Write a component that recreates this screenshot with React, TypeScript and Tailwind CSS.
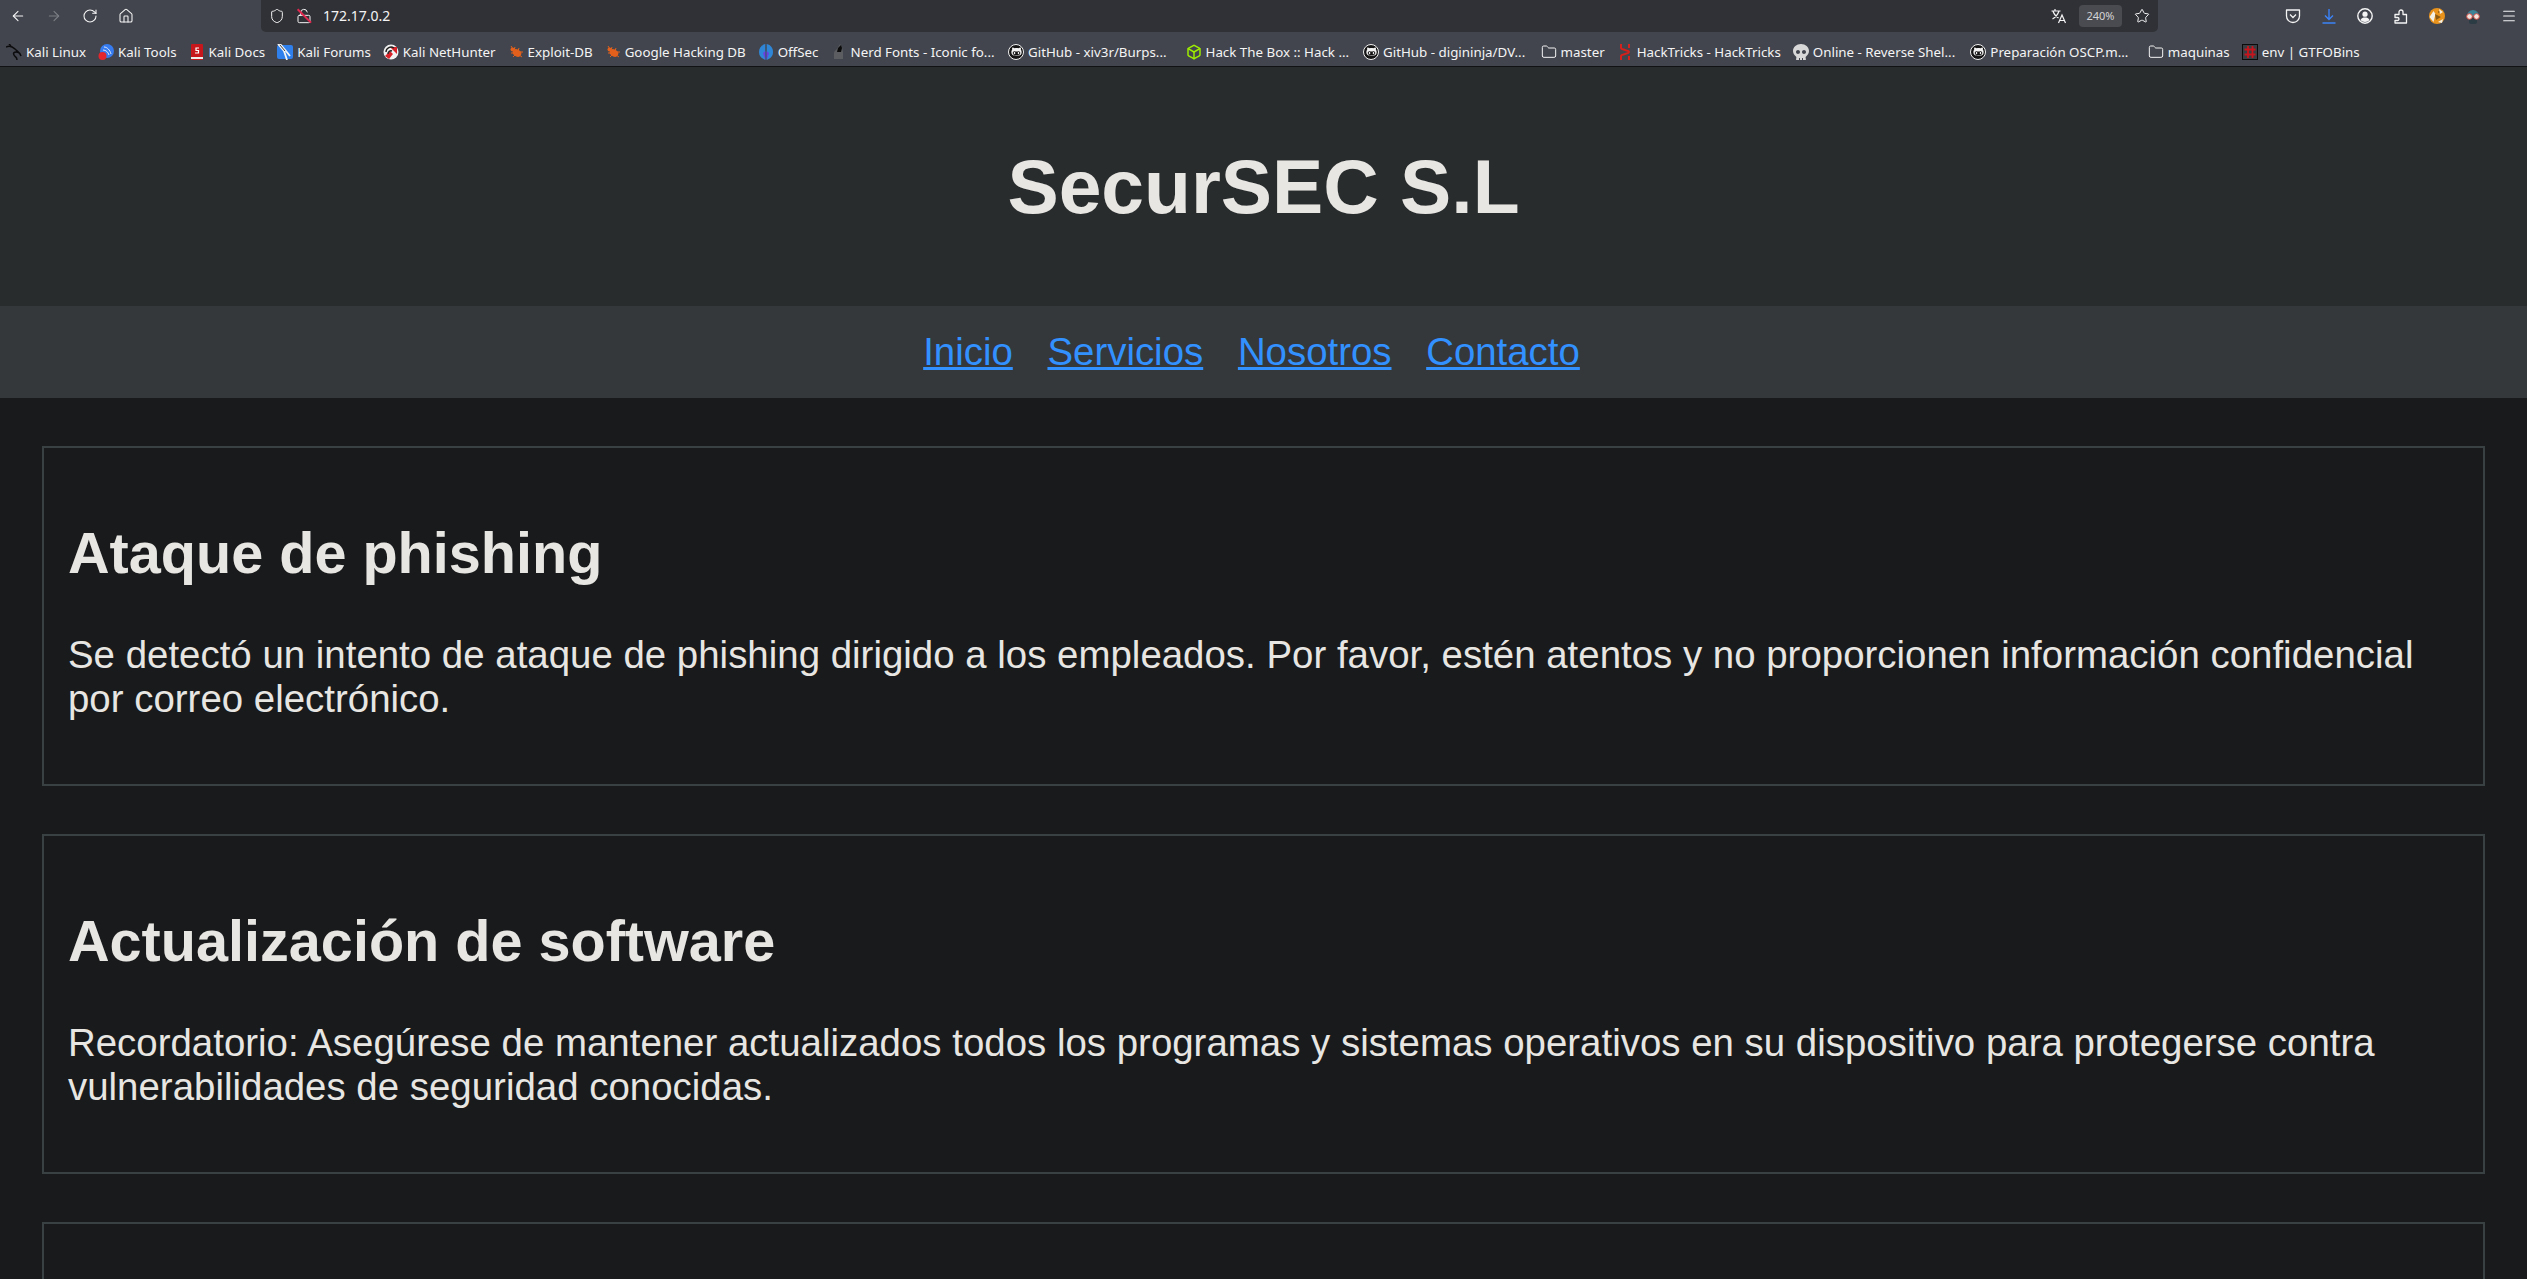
import type { ReactNode } from "react";
import {
  ArrowLeft,
  ArrowRight,
  Box,
  Folder,
  Home,
  LockOpen,
  Menu,
  RotateCw,
  Shield,
  Star,
} from "lucide-react";
import { FaGithubAlt, FaSkull } from "react-icons/fa";

function KaliIcon() {
  return (
    <svg viewBox="0 0 16 16" className="h-4 w-4" fill="none" stroke="#0c0c0e" strokeWidth="1.5">
      <path d="M0 3c4-2 7 0 9 2s5 3 6 7c-1-3-3-4-5-4-2 0-3 1-2 3s3 2 3 5" />
      <path d="M5 2L3 0" />
    </svg>
  );
}

function ToolsIcon() {
  return (
    <svg viewBox="0 0 16 16" className="h-4 w-4">
      <circle cx="9" cy="7" r="7" fill="#367bf0" />
      <path d="M6 3c3 0 6 3 7 7M5 6c3 0 5 2 6 5" stroke="#dfe8f8" fill="none" />
      <circle cx="4.5" cy="12" r="4" fill="#e3262e" />
    </svg>
  );
}

function DocsIcon() {
  return (
    <svg viewBox="0 0 16 16" className="h-4 w-4">
      <rect x="2" y="0" width="12" height="16" rx="1" fill="#c8161d" />
      <rect x="2" y="13" width="12" height="2" fill="#eee" />
      <path d="M10 4H7v2.5h2.5V9H6" stroke="#fff" strokeWidth="1.2" fill="none" />
    </svg>
  );
}

function ForumsIcon() {
  return (
    <svg viewBox="0 0 16 16" className="h-4 w-4">
      <rect x="0" y="1" width="16" height="14" rx="2" fill="#2f80ed" />
      <path d="M1 0l6 7 3 9M3 0l6 7 4 5" stroke="#f4f4f4" strokeWidth="1.8" fill="none" />
      <path d="M3 1l5 6" stroke="#111" strokeWidth="0.8" />
    </svg>
  );
}

function HunterIcon() {
  return (
    <svg viewBox="0 0 16 16" className="h-4 w-4">
      <circle cx="8" cy="8" r="7.5" fill="#f2f2f2" />
      <path d="M2 12l5-5 3 3-4 5zM7 3l7 0 0 7z" fill="#d8232a" />
      <path d="M3 8a5 5 0 0 1 8-4M5 10a3 3 0 0 1 4-3" stroke="#222" strokeWidth="1.4" fill="none" />
    </svg>
  );
}

function BugIcon() {
  return (
    <svg viewBox="0 0 16 16" className="h-4 w-4">
      <ellipse cx="9" cy="9" rx="4.5" ry="3.5" fill="#e2601c" transform="rotate(30 9 9)" />
      <circle cx="4.5" cy="5.5" r="2" fill="#e2601c" />
      <path d="M3 2l2 3M7 3l-1 3M3 9l4 0M5 13l3-3M11 4l-1 3M15 8l-3 0M14 13l-3-2" stroke="#e2601c" strokeWidth="1" />
    </svg>
  );
}

function OffSecIcon() {
  return (
    <svg viewBox="0 0 16 16" className="h-4 w-4">
      <path d="M7.300 0C3 1 1 4 1 8s2 6 6.300 8z" fill="#2f86d6" />
      <path d="M8.700 0C13 1 15 4 15 8s-2 6-6.300 8z" fill="#2f86d6" />
      <path d="M5 9l2.300 7V7zM11 9l-2.300 7V7z" fill="#6d3fe0" />
    </svg>
  );
}

function NerdIcon() {
  return (
    <svg viewBox="0 0 16 16" className="h-4 w-4">
      <path d="M3 15V9c0-2 2-3 3-4l3-5 2 3 1 5v7z" fill="#5b5d61" />
      <path d="M6 8l1-4 3-3 1 3-1 4z" fill="#0b0b0b" />
    </svg>
  );
}

function GitHubIcon() {
  return (
    <span className="flex h-4 w-4 items-center justify-center rounded-full border border-[#f2f2f2] bg-[#151515]">
      <FaGithubAlt className="h-[11px] w-[11px] text-[#f2f2f2]" />
    </span>
  );
}

function TricksIcon() {
  return (
    <svg viewBox="0 0 16 16" className="h-4 w-4" fill="none" stroke="#d5201c" strokeWidth="2">
      <path d="M4 0v4c0 2 8 2 8 4s-8 2-8 4v4M12 0v4M12 12v4" />
    </svg>
  );
}

function GtfoIcon() {
  return (
    <svg viewBox="0 0 16 16" className="h-4 w-4">
      <rect x="0.5" y="0.5" width="15" height="15" fill="#3a3d42" stroke="#0b0b0b" />
      <path d="M6 2v12M10.500 2v12M2.500 5.500h11M2.500 10.500h11" stroke="#c8141c" strokeWidth="1.8" />
    </svg>
  );
}

function PocketIcon() {
  return (
    <svg viewBox="0 0 16 16" className="h-4 w-4" fill="none" stroke="#f4f4f5" strokeWidth="1.3">
      <path d="M1.500 2h13v6a6.500 6.500 0 0 1-13 0z" strokeLinejoin="round" />
      <path d="M5 6.500l3 3 3-3" />
    </svg>
  );
}

function TranslateIcon() {
  return (
    <svg viewBox="0 0 16 16" className="h-4 w-4" fill="none" stroke="#f4f4f5" strokeWidth="1.2">
      <path d="M0.500 3h9M4 1v2M2 3c1 4 4 6 5.500 7M8 3c-1 3-3 6-6.500 8" />
      <path d="M7.500 15l3.500-8 3.500 8M9 12.500h4.500" />
    </svg>
  );
}

function AccountIcon() {
  return (
    <svg viewBox="0 0 16 16" className="h-4 w-4">
      <circle cx="8" cy="8" r="7.2" fill="none" stroke="#f4f4f5" strokeWidth="1.4" />
      <circle cx="8" cy="6.200" r="2.600" fill="#f4f4f5" />
      <path d="M3.500 12c1-2 2.500-2.500 4.500-2.500s3.500.5 4.500 2.500c-1 1-2.500 2-4.500 2s-3.500-1-4.500-2z" fill="#f4f4f5" />
    </svg>
  );
}

function ExtensionIcon() {
  return (
    <svg viewBox="0 0 16 16" className="h-4 w-4" fill="none" stroke="#f4f4f5" strokeWidth="1.3" strokeLinejoin="round">
      <path d="M2 6.500h4V4a2 2 0 0 1 4 0v2.500h3.500V15H2v-2.500h2.500a1.500 1.500 0 0 0 0-3H2z" />
    </svg>
  );
}

function FoxAvatar() {
  return (
    <svg viewBox="0 0 16 16" className="h-4 w-4">
      <circle cx="8" cy="8" r="8" fill="#e8921b" />
      <path d="M0.500 9l4-6 2 3-2 8zM10 1l4 3-3 2zM9 14l5-3-1 4z" fill="#f4efe4" />
      <path d="M6 6l6 3-5 3zM9 3l2 1-2 1z" fill="#8a5a14" />
    </svg>
  );
}

function MaskAvatar() {
  return (
    <svg viewBox="0 0 16 16" className="h-4 w-4">
      <path d="M2 8a6 6 0 0 1 12 0z" fill="#3a8296" />
      <rect x="4" y="9" width="8" height="7" rx="2" fill="#2b3c44" />
      <circle cx="4.500" cy="8.500" r="2.800" fill="#f0e6df" stroke="#d04b42" />
      <circle cx="11.500" cy="8.500" r="2.800" fill="#f0e6df" stroke="#d04b42" />
    </svg>
  );
}

const folderIcon = <Folder className="h-4 w-4 text-[#f4f4f5]" strokeWidth={1.5} />;

const bookmarks: { icon: ReactNode; label: string; cut?: boolean }[] = [
  { icon: <KaliIcon />, label: "Kali Linux" },
  { icon: <ToolsIcon />, label: "Kali Tools" },
  { icon: <DocsIcon />, label: "Kali Docs" },
  { icon: <ForumsIcon />, label: "Kali Forums" },
  { icon: <HunterIcon />, label: "Kali NetHunter" },
  { icon: <BugIcon />, label: "Exploit-DB" },
  { icon: <BugIcon />, label: "Google Hacking DB" },
  { icon: <OffSecIcon />, label: "OffSec" },
  { icon: <NerdIcon />, label: "Nerd Fonts - Iconic fo...", cut: true },
  { icon: <GitHubIcon />, label: "GitHub - xiv3r/Burps...", cut: true },
  { icon: <Box className="h-4 w-4 text-[#9fef00]" strokeWidth={2.2} />, label: "Hack The Box :: Hack ...", cut: true },
  { icon: <GitHubIcon />, label: "GitHub - digininja/DV...", cut: true },
  { icon: folderIcon, label: "master" },
  { icon: <TricksIcon />, label: "HackTricks - HackTricks" },
  { icon: <FaSkull className="h-4 w-4 text-[#d8d8d8]" />, label: "Online - Reverse Shel...", cut: true },
  { icon: <GitHubIcon />, label: "Preparación OSCP.m...", cut: true },
  { icon: folderIcon, label: "maquinas" },
  { icon: <GtfoIcon />, label: "env | GTFOBins" },
];

const posts = [
  {
    title: "Ataque de phishing",
    body: "Se detectó un intento de ataque de phishing dirigido a los empleados. Por favor, estén atentos y no proporcionen información confidencial por correo electrónico.",
  },
  {
    title: "Actualización de software",
    body: "Recordatorio: Asegúrese de mantener actualizados todos los programas y sistemas operativos en su dispositivo para protegerse contra vulnerabilidades de seguridad conocidas.",
  },
];

function BrowserChrome() {
  return (
    <div className="font-['Noto_Sans',sans-serif] text-[#f4f4f5]">
      <div className="flex h-8 items-start bg-[#42454d]">
        <div className="flex h-8 w-[261px] shrink-0 items-center gap-[20px] pl-[10px]">
          <ArrowLeft className="h-4 w-4" strokeWidth={1.6} />
          <ArrowRight className="h-4 w-4 text-[#7d7f85]" strokeWidth={1.6} />
          <RotateCw className="h-4 w-4" strokeWidth={1.6} />
          <Home className="h-4 w-4" strokeWidth={1.6} />
        </div>
        <div className="flex h-8 w-[1897px] shrink-0 items-center rounded-b-[5px] bg-[#303136] pr-[8px] pl-[8px]">
          <Shield className="h-4 w-4" strokeWidth={1.5} />
          <span className="relative ml-[11px] flex h-4 w-4 items-center justify-center">
            <LockOpen className="h-4 w-4" strokeWidth={1.5} />
            <span className="absolute top-[7px] left-[-1px] h-[1.5px] w-[19px] rotate-45 bg-[#e22850]" />
          </span>
          <span className="ml-[11px] text-[14px]">172.17.0.2</span>
          <div className="ml-auto flex items-center">
            <TranslateIcon />
            <span className="ml-[12px] flex h-[22px] w-[43px] items-center justify-center rounded-[4px] bg-[#4a4b50] text-[11px] text-[#d4d4d6]">
              240%
            </span>
            <Star className="ml-[12px] h-4 w-4" strokeWidth={1.5} />
          </div>
        </div>
        <div className="flex h-8 flex-1 items-center gap-[20px] pl-[127px]">
          <PocketIcon />
          <svg viewBox="0 0 16 16" className="h-4 w-4" fill="none" stroke="#3b82f6" strokeWidth="1.4">
            <path d="M8 1v10M4 7.500l4 4 4-4M1.500 15h13" />
          </svg>
          <AccountIcon />
          <ExtensionIcon />
          <FoxAvatar />
          <MaskAvatar />
          <Menu className="h-4 w-4" strokeWidth={1.6} />
        </div>
      </div>
      <div className="flex h-[35px] items-center border-b border-[#111214] bg-[#42454d] pt-[5px] text-[13.33px]">
        {bookmarks.map((b) => (
          <div
            key={b.label}
            className={
              b.cut
                ? "flex w-[177.5px] shrink-0 items-center gap-[4px] px-[6px] whitespace-nowrap"
                : "flex shrink-0 items-center gap-[4px] px-[6px] whitespace-nowrap"
            }
          >
            {b.icon}
            <span>{b.label}</span>
          </div>
        ))}
      </div>
    </div>
  );
}

export default function App() {
  return (
    <div className="h-[1279px] overflow-hidden bg-[#181a1b] font-['Liberation_Sans',Arial,sans-serif] text-[38.4px] leading-[44px] text-[#e8e6e3]">
      <BrowserChrome />
      <header className="bg-[#282c2d] p-6 text-center">
        <h1 className="mt-[50.5px] mb-[52.5px] text-[76.8px] leading-[88px] font-bold">SecurSEC S.L</h1>
      </header>
      <nav className="bg-[#34383b] p-6 text-center">
        {["Inicio", "Servicios", "Nosotros", "Contacto"].map((item) => (
          <span key={item}>
            <a href="#" className="mr-6 text-[#3391ff] underline">
              {item}
            </a>{" "}
          </span>
        ))}
      </nav>
      <main className="mt-12 flex flex-col gap-12 px-[42px]">
        {posts.map((p) => (
          <article key={p.title} className="border-2 border-[#3a4143] p-6">
            <h2 className="mt-[47.8px] mb-[46.8px] text-[57.6px] leading-[66px] font-bold">{p.title}</h2>
            <p className="mb-[39.4px] tracking-[0.015px]">{p.body}</p>
          </article>
        ))}
        <article className="h-[340px] border-2 border-[#3a4143] p-6" />
      </main>
    </div>
  );
}
